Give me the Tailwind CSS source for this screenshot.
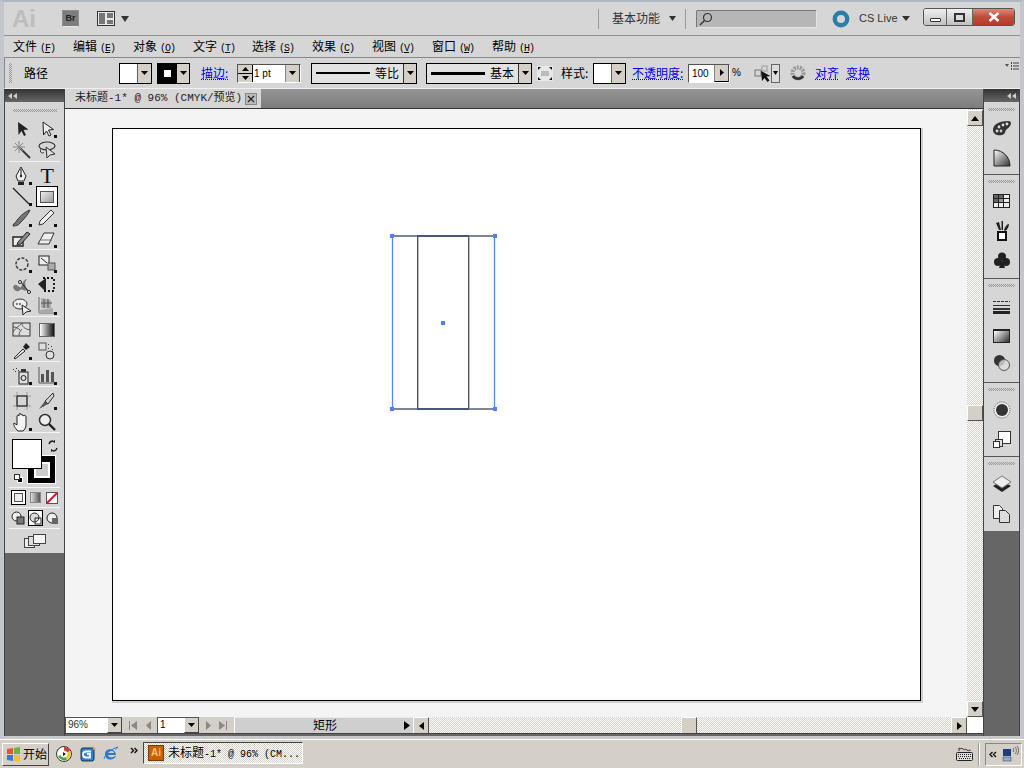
<!DOCTYPE html>
<html><head><meta charset="utf-8"><script src="https://cdn.jsdelivr.net/npm/@tailwindcss/browser@4"></script></head>
<body class="m-0 overflow-hidden">
<div class="w-[1024px] h-[768px] flex flex-col bg-[#d4d0c8] overflow-hidden font-['Liberation_Sans','Noto_Sans_CJK_SC',sans-serif] text-[12px] text-black">
<!-- window -->
<div class="h-[739px] shrink-0 flex flex-col bg-[#d6d6d6] border-x-[4px] border-t-[2px] border-b-[3px] border-x-[#c3c7cb] border-t-[#aeb9c3] border-b-[#c9c9c9]">
 <!-- title bar -->
 <div class="h-[34px] shrink-0 flex items-center border-b border-[#8f8f8f] pl-[8px] relative">
  <span class="w-[24px] text-[24px] leading-[24px] font-bold text-[#bdbdbd] font-['Liberation_Sans',sans-serif]">Ai</span>
  <span class="ml-[26px] w-[17px] h-[17px] bg-[#7d7d7d] border border-[#8f8f8f] border-b-[#e8e8e8] text-[9px] leading-[15px] font-bold text-center text-[#222]">Br</span>
  <svg class="ml-[18px]" width="19" height="16" viewBox="0 0 19 16"><rect x=".5" y=".5" width="17" height="14" fill="#e8e8e8" stroke="#333"/><rect x="2" y="2" width="6" height="11" fill="#777"/><rect x="10" y="2" width="6" height="5" fill="#777"/><rect x="10" y="9" width="6" height="4" fill="#777"/></svg>
  <svg class="ml-[5px]" width="8" height="6" viewBox="0 0 8 6"><path d="M0 0h8L4 6z" fill="#333"/></svg>
  <div class="ml-[469px] w-px h-[20px] bg-[#9a9a9a]"></div>
  <span class="ml-[13px] text-[12px] text-[#333] w-[48px] leading-none">基本功能</span>
  <svg class="ml-[9px]" width="7" height="5" viewBox="0 0 7 5"><path d="M0 0h7L3.500 5z" fill="#333"/></svg>
  <div class="ml-[9px] w-px h-[20px] bg-[#9a9a9a]"></div>
  <div class="ml-[10px] w-[121px] h-[18px] bg-[#b6b6b6] border border-[#777] border-b-[#e6e6e6] border-r-[#e6e6e6] rounded-[2px] flex items-center pl-[2px]"><svg width="14" height="14" viewBox="0 0 14 14"><circle cx="8.500" cy="5.500" r="4" fill="none" stroke="#333" stroke-width="1.200"/><path d="M5.500 8.500L1 13" stroke="#333" stroke-width="1.500"/></svg></div>
  <svg class="ml-[15px]" width="18" height="18" viewBox="0 0 18 18"><circle cx="9" cy="9" r="6.200" fill="none" stroke="#2a7fa8" stroke-width="4.400"/></svg>
  <span class="ml-[9px] w-[38px] text-[#333] text-[11px] whitespace-nowrap">CS Live</span>
  <svg class="ml-[5px]" width="8" height="5" viewBox="0 0 8 5"><path d="M0 0h8L4 5z" fill="#333"/></svg>
  <div class="ml-[13px] w-[92px] h-[18px] flex border border-[#555] rounded-[3px] overflow-hidden -mt-[3px]">
   <div class="w-[23px] bg-[linear-gradient(#f0f0f0,#c0c0c0)] border-r border-[#666] flex items-end justify-center pb-[3px]"><div class="w-[11px] h-[4px] bg-white border border-[#333] rounded-[1px]"></div></div>
   <div class="w-[26px] bg-[linear-gradient(#f0f0f0,#c0c0c0)] border-r border-[#666] flex items-center justify-center"><div class="w-[11px] h-[9px] border-[2px] border-[#333] bg-[#ddd]"></div></div>
   <div class="flex-1 bg-[linear-gradient(#e08878,#c04b3a_50%,#b83a28)] flex items-center justify-center"><svg width="12" height="10" viewBox="0 0 12 10"><path d="M1.500 1l9 8M10.500 1l-9 8" stroke="#fff" stroke-width="2.600"/></svg></div>
  </div>
 </div>
 <!-- menu -->
 <div class="h-[21px] shrink-0 flex items-center pl-[9px] font-['Noto_Sans_CJK_SC',sans-serif] text-[12px] leading-none text-black">
  <span class="w-[60px] whitespace-nowrap">文件<span class="ml-[3px] font-['Liberation_Mono'] text-[10px] tracking-[-1px]">(<u>F</u>)</span></span>
  <span class="w-[60px] whitespace-nowrap">编辑<span class="ml-[3px] font-['Liberation_Mono'] text-[10px] tracking-[-1px]">(<u>E</u>)</span></span>
  <span class="w-[60px] whitespace-nowrap">对象<span class="ml-[3px] font-['Liberation_Mono'] text-[10px] tracking-[-1px]">(<u>O</u>)</span></span>
  <span class="w-[59px] whitespace-nowrap">文字<span class="ml-[3px] font-['Liberation_Mono'] text-[10px] tracking-[-1px]">(<u>T</u>)</span></span>
  <span class="w-[60px] whitespace-nowrap">选择<span class="ml-[3px] font-['Liberation_Mono'] text-[10px] tracking-[-1px]">(<u>S</u>)</span></span>
  <span class="w-[60px] whitespace-nowrap">效果<span class="ml-[3px] font-['Liberation_Mono'] text-[10px] tracking-[-1px]">(<u>C</u>)</span></span>
  <span class="w-[60px] whitespace-nowrap">视图<span class="ml-[3px] font-['Liberation_Mono'] text-[10px] tracking-[-1px]">(<u>V</u>)</span></span>
  <span class="w-[60px] whitespace-nowrap">窗口<span class="ml-[3px] font-['Liberation_Mono'] text-[10px] tracking-[-1px]">(<u>W</u>)</span></span>
  <span class="w-[60px] whitespace-nowrap">帮助<span class="ml-[3px] font-['Liberation_Mono'] text-[10px] tracking-[-1px]">(<u>H</u>)</span></span>
 </div>
 <!-- control bar -->
 <div class="h-[32px] shrink-0 flex items-center border-t border-l border-[#8a8a8a] border-b border-b-[#f0f0f0] relative font-['Noto_Sans_CJK_SC',sans-serif] leading-none">
  <div class="ml-[4px] w-[3px] h-[20px] bg-[repeating-conic-gradient(#999999_0%_25%,#d6d6d6_0%_50%)] bg-size-[2px_2px]"></div>
  <span class="ml-[12px] w-[24px] whitespace-nowrap">路径</span>
  <!-- fill -->
  <div class="ml-[71px] w-[33px] h-[21px] flex border border-black bg-white"><div class="w-[18px] border-r border-[#2a6bb0]"></div><div class="flex-1 bg-[#d4d0c8] flex items-center justify-center"><svg width="7" height="4"><path d="M0 0h7L3.500 4z"/></svg></div></div>
  <!-- stroke -->
  <div class="ml-[5px] w-[33px] h-[21px] flex border border-black"><div class="w-[19px] bg-black flex items-center justify-center"><div class="w-[7px] h-[7px] bg-white"></div></div><div class="flex-1 bg-[#d4d0c8] flex items-center justify-center"><svg width="7" height="4"><path d="M0 0h7L3.500 4z"/></svg></div></div>
  <span class="ml-[11px] text-[#0000ee] underline decoration-dotted w-[28px] whitespace-nowrap">描边:</span>
  <!-- weight -->
  <div class="ml-[8px] w-[64px] h-[19px] flex border border-[#555] border-b-white border-r-white bg-white">
   <div class="w-[15px] flex flex-col bg-[#d4d0c8] border-r border-black text-center"><div class="flex-1 flex items-center justify-center border-b border-black"><svg width="7" height="4"><path d="M0 4h7L3.500 0z"/></svg></div><div class="flex-1 flex items-center justify-center"><svg width="7" height="4"><path d="M0 0h7L3.500 4z"/></svg></div></div>
   <span class="pl-[1px] w-[31px] text-[10px] leading-[17px] font-['Liberation_Sans']">1 pt</span>
   <div class="w-[15px] bg-[#d4d0c8] border-l border-[#888] border-r border-r-[#444] flex items-center justify-center ml-[1px]"><svg width="7" height="4"><path d="M0 0h7L3.500 4z"/></svg></div>
  </div>
  <!-- line 1 -->
  <div class="ml-[10px] w-[106px] h-[21px] flex items-center border border-black bg-[#e2e2e2]">
   <div class="ml-[4px] w-[54px] h-[2px] bg-black shrink-0"></div><span class="ml-[5px] w-[24px] shrink-0 whitespace-nowrap text-[12px]">等比</span>
   <div class="ml-[4px] w-[13px] shrink-0 h-full border-l border-[#333] bg-[#d4d0c8] flex items-center justify-center"><svg width="7" height="4"><path d="M0 0h7L3.500 4z"/></svg></div>
  </div>
  <!-- line 2 -->
  <div class="ml-[9px] w-[106px] h-[21px] flex items-center border border-black bg-[#e2e2e2]">
   <div class="ml-[4px] w-[54px] h-[3px] bg-black shrink-0"></div><span class="ml-[5px] w-[24px] shrink-0 whitespace-nowrap">基本</span>
   <div class="ml-[4px] w-[13px] shrink-0 h-full border-l border-[#333] bg-[#d4d0c8] flex items-center justify-center"><svg width="7" height="4"><path d="M0 0h7L3.500 4z"/></svg></div>
  </div>
  <svg class="ml-[5px]" width="16" height="15" viewBox="0 0 16 15"><rect width="16" height="15" fill="#e8e8e8"/><rect x="4" y="5" width="8" height="5" fill="#bbb"/><path d="M1 1h3L1 4zM15 1h-3l3 3zM1 14h3l-3-3zM15 14h-3l3-3z" fill="#111"/></svg>
  <span class="ml-[8px] w-[28px] whitespace-nowrap">样式:</span>
  <div class="ml-[4px] w-[33px] h-[21px] flex border border-black bg-white"><div class="w-[18px] border-r border-[#2a6bb0]"></div><div class="flex-1 bg-[#d4d0c8] flex items-center justify-center"><svg width="7" height="4"><path d="M0 0h7L3.500 4z"/></svg></div></div>
  <span class="ml-[6px] text-[#0000ee] underline decoration-dotted w-[52px] whitespace-nowrap">不透明度:</span>
  <div class="ml-[4px] w-[42px] h-[19px] flex border border-[#555] border-b-white border-r-white bg-white">
   <span class="w-[25px] pl-[3px] text-[10px] leading-[17px] font-['Liberation_Sans']">100</span>
   <div class="flex-1 bg-[#d4d0c8] border-l border-[#888] border-r border-r-[#444] border-b border-b-black flex items-center justify-center"><svg width="4" height="7"><path d="M0 0v7l4-3.500z"/></svg></div>
  </div>
  <span class="ml-[2px] w-[10px] text-[10px] font-['Liberation_Sans']">%</span>
  <svg class="ml-[12px]" width="17" height="19" viewBox="0 0 17 19"><rect x="1" y="6" width="6" height="6" fill="none" stroke="#777"/><rect x="8" y="2" width="5" height="5" fill="none" stroke="#999"/><path d="M7 7l1 10 2.500-3 3 4 2-1.500-3-4 4-.5z" fill="#111"/></svg>
  <div class="w-[9px] h-[19px] border border-[#666] bg-[#ddd] flex items-center justify-center"><svg width="5" height="4"><path d="M0 0h5L2.500 4z"/></svg></div>
  <svg class="ml-[10px]" width="16" height="16" viewBox="0 0 16 16"><circle cx="8" cy="8" r="5.500" fill="none" stroke="#999" stroke-width="4" stroke-dasharray="2 1"/><path d="M3 11a6 6 0 0 0 10 0" fill="none" stroke="#333" stroke-width="2.500"/></svg>
  <span class="ml-[9px] text-[#0000ee] underline decoration-dotted w-[24px]">对齐</span>
  <span class="ml-[7px] text-[#0000ee] underline decoration-dotted w-[24px]">变换</span>
  <svg class="absolute right-[1px] top-[3px]" width="14" height="10" viewBox="0 0 14 10"><path d="M0 3h4L2 6z" fill="#555"/><path d="M6 1h1v2H6zM6 4h1v2H6zM6 7h1v2H6zM8 1.500h6v1H8zM8 4.500h6v1H8zM8 7.500h6v1H8z" fill="#444"/></svg>
 </div>
 <!-- work area -->
 <div class="flex-1 min-h-0 flex bg-[#666]">
  <!-- left toolbar -->
  <div class="w-[61px] shrink-0 flex flex-col border-l border-r border-[#444] bg-[#666]">
   <div class="h-[13px] bg-[linear-gradient(#333,#666)] flex items-center pl-[3px] shrink-0"><svg width="9" height="6" viewBox="0 0 9 6"><path d="M4 0v6L0 3zM9 0v6L5 3z" fill="#ccc"/></svg></div>
   <div class="h-[451px] shrink-0 bg-[#d6d6d6] flex flex-col items-center">
    <div class="h-[16px] w-full flex items-center justify-center shrink-0"><div class="w-[44px] h-[3px] bg-[repeating-conic-gradient(#999999_0%_25%,#d6d6d6_0%_50%)] bg-size-[2px_2px]"></div></div>
    <!-- section 1 -->
    <div class="w-[51px] h-[44px] grid grid-cols-2 grid-rows-2 place-items-center border-b border-[#f4f4f4] shrink-0">
     <svg width="20" height="20" viewBox="0 0 20 20"><path d="M6 3l.5 13 3-4 2.500 5 2-1-2.500-5 5-.5z" fill="#222"/></svg>
     <svg width="20" height="20" viewBox="0 0 20 20"><path d="M6 3l.5 13 3-4 2.500 5 2-1-2.500-5 5-.5z" fill="#eee" stroke="#222"/><path d="M17 16h3v3h-3z" fill="#111"/></svg>
     <svg width="20" height="20" viewBox="0 0 20 20"><path d="M8 8l10 10" stroke="#333" stroke-width="1.800"/><path d="M7 1v12M1 7h12M3 3l8 8M11 3l-8 8" stroke="#888"/></svg>
     <svg width="20" height="20" viewBox="0 0 20 20"><ellipse cx="10" cy="6" rx="8" ry="4" fill="none" stroke="#333" stroke-width="1.200"/><path d="M4 9c-2 4 2 5 3 3M9 7l1 11 3-3 5-1z" fill="#ddd" stroke="#333"/></svg>
    </div>
    <!-- section 2 -->
    <div class="w-[51px] h-[88px] pt-[3px] grid grid-cols-2 grid-rows-4 place-items-center border-b border-[#f4f4f4] shrink-0">
     <svg width="20" height="20" viewBox="0 0 20 20"><path d="M9 1l5 9-2 5H6l-2-5z" fill="#eee" stroke="#222"/><path d="M9 3v6" stroke="#222"/><circle cx="9" cy="10" r="1.200" fill="#222"/><path d="M6 16h6v3H6z" fill="#222"/><path d="M17 16h3v3h-3z" fill="#111"/></svg>
     <span class="font-['Liberation_Serif'] text-[22px] leading-none text-[#111]">T</span>
     <svg width="20" height="20" viewBox="0 0 20 20"><path d="M1 1l16 16" stroke="#222" stroke-width="1.200"/><path d="M17 16h3v3h-3z" fill="#111"/></svg>
     <div class="w-[22px] h-[21px] bg-white border border-black flex items-center justify-center relative"><div class="w-[14px] h-[12px] border border-[#555] bg-[linear-gradient(135deg,#eee,#999)]"></div></div>
     <svg width="20" height="20" viewBox="0 0 20 20"><path d="M18 2C12 4 6 10 4 14c-2 1-3 3-3 4 3 0 6-1 7-3 3-3 8-8 10-13z" fill="#777" stroke="#333"/><path d="M17 16h3v3h-3z" fill="#111"/></svg>
     <svg width="20" height="20" viewBox="0 0 20 20"><path d="M14 2l3 3L6 16l-4 1 1-4z" fill="#eee" stroke="#333"/><path d="M17 16h3v3h-3z" fill="#111"/></svg>
     <svg width="20" height="20" viewBox="0 0 20 20"><path d="M1 8h10v9H1z" fill="#eee" stroke="#222" stroke-width="1.400"/><path d="M6 13L15 3l3 2-9 10-4 1z" fill="#888" stroke="#222"/></svg>
     <svg width="20" height="20" viewBox="0 0 20 20"><path d="M7 4h10l-5 11H1z" fill="#eee" stroke="#333"/><path d="M3 11h12" stroke="#777"/><path d="M17 16h3v3h-3z" fill="#111"/></svg>
    </div>
    <!-- section 3 -->
    <div class="w-[51px] h-[67px] pt-[3px] grid grid-cols-2 grid-rows-3 place-items-center border-b border-[#f4f4f4] shrink-0">
     <svg width="20" height="20" viewBox="0 0 20 20"><circle cx="10" cy="10" r="6" fill="none" stroke="#333" stroke-width="1.400" stroke-dasharray="3 1.500"/><path d="M17 16h3v3h-3z" fill="#111"/></svg>
     <svg width="20" height="20" viewBox="0 0 20 20"><rect x="2" y="2" width="10" height="9" fill="#eee" stroke="#222"/><rect x="11" y="9" width="7" height="7" fill="#aaa" stroke="#555"/><path d="M4 4l6 5" stroke="#222"/><path d="M17 16h3v3h-3z" fill="#111"/></svg>
     <svg width="20" height="20" viewBox="0 0 20 20"><path d="M1 12c3-6 6 2 8 0s1-7 6-8c-3 3-2 8 1 11-5 2-6-3-9 1-2 1-5 0-6-4z" fill="#777"/><path d="M8 6l9 11" stroke="#222"/><circle cx="8" cy="7" r="1.500" fill="#fff" stroke="#222"/><circle cx="17" cy="17" r="1.500" fill="#fff" stroke="#222"/></svg>
     <svg width="20" height="20" viewBox="0 0 20 20"><path d="M1 9l8-6v14z" fill="#222"/><path d="M6 3h11v13H6" fill="none" stroke="#111" stroke-width="1.800" stroke-dasharray="2 2"/></svg>
     <svg width="20" height="20" viewBox="0 0 20 20"><ellipse cx="8" cy="8" rx="7" ry="5" fill="#eee" stroke="#333"/><circle cx="5" cy="8" r="1" fill="#555"/><circle cx="8" cy="8" r="1" fill="#555"/><path d="M10 9l1 10 3-3 5-1z" fill="#eee" stroke="#222"/></svg>
     <svg width="20" height="20" viewBox="0 0 20 20"><path d="M2 1v16h16" fill="none" stroke="#666"/><path d="M2 14l14-2v5H2zM4 2l10 2v8H4z" fill="#aaa"/><path d="M7 3v9M11 3v9M4 7h11" stroke="#555"/><path d="M17 16h3v3h-3z" fill="#111"/></svg>
    </div>
    <!-- section 4 -->
    <div class="w-[51px] h-[45px] pt-[3px] grid grid-cols-2 grid-rows-2 place-items-center border-b border-[#f4f4f4] shrink-0">
     <svg width="20" height="20" viewBox="0 0 20 20"><rect x="1" y="3" width="17" height="13" fill="#ddd" stroke="#333"/><path d="M1 12C5 6 8 6 10 3M10 3c0 4 3 6 8 7M7 16c0-4 2-6 3-7M1 7c3 0 5 1 7 3" stroke="#555" fill="none"/></svg>
     <div class="w-[16px] h-[14px] bg-[linear-gradient(90deg,#fff,#111)] border border-[#666]"></div>
     <svg width="20" height="20" viewBox="0 0 20 20"><path d="M3 18l-1-1 9-9 2 2z" fill="#eee" stroke="#222"/><path d="M11 6l3-4 4 4-4 3z" fill="#222"/><path d="M17 16h3v3h-3z" fill="#111"/></svg>
     <svg width="20" height="20" viewBox="0 0 20 20"><rect x="2" y="2" width="7" height="7" fill="#ddd" stroke="#555"/><path d="M11 3h1v1h-1zM14 5h1v1h-1zM11 7h1v1h-1zM15 8h1v1h-1z" fill="#444"/><circle cx="13" cy="14" r="4" fill="#ddd" stroke="#333"/></svg>
    </div>
    <!-- section 5 -->
    <div class="w-[51px] h-[25px] pt-[3px] grid grid-cols-2 place-items-center border-b border-[#f4f4f4] shrink-0">
     <svg width="20" height="20" viewBox="0 0 20 20"><rect x="7" y="6" width="9" height="12" fill="#ddd" stroke="#222"/><circle cx="11.500" cy="12" r="2.500" fill="none" stroke="#222"/><rect x="9" y="3" width="5" height="3" fill="#333"/><path d="M1 3h1v1H1zM4 2h1v1H4zM3 5h1v1H3zM6 4h1v1H6z" fill="#333"/><path d="M17 16h3v3h-3z" fill="#111"/></svg>
     <svg width="20" height="20" viewBox="0 0 20 20"><path d="M2 1v16h15" fill="none" stroke="#555"/><path d="M4 8h3v8H4zM9 4h3v12H9zM14 6h3v10h-3z" fill="#555"/><path d="M17 16h3v3h-3z" fill="#111"/></svg>
    </div>
    <!-- section 6 -->
    <div class="w-[51px] h-[46px] pt-[3px] grid grid-cols-2 grid-rows-2 place-items-center border-b border-[#f4f4f4] shrink-0">
     <svg width="20" height="20" viewBox="0 0 20 20"><rect x="5" y="5" width="10" height="10" fill="none" stroke="#222" stroke-width="1.300"/><path d="M1 5h3M16 5h3M1 15h3M16 15h3M5 1v3M15 1v3M5 16v3M15 16v3" stroke="#999"/></svg>
     <svg width="20" height="20" viewBox="0 0 20 20"><path d="M2 18l6-8 3 3z" fill="#555"/><path d="M8 10l8-8 1 3-6 8z" fill="#ccc" stroke="#333"/><path d="M17 16h3v3h-3z" fill="#111"/></svg>
     <svg width="20" height="20" viewBox="0 0 20 20"><path d="M6 19c-3-3-5-6-4-8l3 2V4c1-2 2 0 2 0V2c1-1 2 0 2 0v1c1-1 2 0 2 0v1c1-1 3-1 3 1v8c0 3-2 5-3 6z" fill="#f4f4f4" stroke="#222"/><path d="M17 16h3v3h-3z" fill="#111"/></svg>
     <svg width="20" height="20" viewBox="0 0 20 20"><circle cx="8" cy="8" r="5.500" fill="#eee" stroke="#333" stroke-width="1.500"/><path d="M12 12l6 6" stroke="#222" stroke-width="2.400"/></svg>
    </div>
    <!-- color -->
    <div class="w-[51px] h-[55px] relative border-b border-[#f4f4f4] shrink-0">
     <div class="absolute left-[18px] top-[22px] w-[29px] h-[29px] bg-black border border-white flex items-center justify-center"><div class="w-[16px] h-[16px] border-[2px] border-white bg-[#ccc]"></div></div>
     <div class="absolute left-[3px] top-[6px] w-[30px] h-[30px] bg-white border border-black"></div>
     <svg class="absolute left-[38px] top-[7px]" width="12" height="12" viewBox="0 0 12 12"><path d="M2 4a4 4 0 0 1 4-3M10 8a4 4 0 0 1-4 3" fill="none" stroke="#222" stroke-width="1.300"/><path d="M8 0v3l-3-1.500zM4 9v3l3-1.500z" fill="#222"/></svg>
     <div class="absolute left-[8px] top-[44px] w-[6px] h-[6px] bg-black border border-white"></div>
     <div class="absolute left-[5px] top-[41px] w-[6px] h-[6px] bg-white border border-[#333]"></div>
    </div>
    <!-- modes -->
    <div class="w-[51px] h-[20px] flex items-center justify-around border-b border-[#f4f4f4] shrink-0">
     <div class="w-[15px] h-[15px] bg-white border border-black p-[2px]"><div class="w-full h-full border border-[#555] bg-[#eee]"></div></div>
     <div class="w-[11px] h-[11px] bg-[linear-gradient(90deg,#ddd,#555)] border border-[#888]"></div>
     <svg width="12" height="12" viewBox="0 0 12 12"><rect x=".5" y=".5" width="11" height="11" fill="#fff" stroke="#555"/><path d="M1 11L11 1" stroke="#e0102a" stroke-width="2"/></svg>
    </div>
    <!-- draw modes -->
    <div class="w-[51px] h-[21px] flex items-center justify-around border-b border-[#f4f4f4] shrink-0">
     <svg width="14" height="14" viewBox="0 0 14 14"><circle cx="5.500" cy="5.500" r="4.500" fill="#eee" stroke="#222"/><rect x="6" y="6" width="7" height="7" fill="#777" stroke="#222"/></svg>
     <div class="w-[15px] h-[16px] bg-white border border-black flex items-center justify-center"><svg width="13" height="13" viewBox="0 0 13 13"><circle cx="5.500" cy="5.500" r="4.500" fill="#ddd" stroke="#222"/><rect x="6" y="6" width="6" height="6" fill="none" stroke="#222"/></svg></div>
     <svg width="13" height="13" viewBox="0 0 13 13"><circle cx="6" cy="6" r="5" fill="#eee" stroke="#222"/><rect x="6" y="6" width="6" height="6" fill="#666"/></svg>
    </div>
    <!-- screen -->
    <div class="w-[51px] flex-1 flex items-center justify-center"><svg width="22" height="14" viewBox="0 0 22 14"><rect x=".5" y="4.500" width="10" height="9" fill="#eee" stroke="#444"/><rect x="4.500" y="2.500" width="11" height="9" fill="#ddd" stroke="#444"/><rect x="9.500" y=".5" width="12" height="9" fill="#f4f4f4" stroke="#444"/></svg></div>
   </div>
  </div>
  <!-- doc -->
  <div class="w-[918px] shrink-0 flex flex-col">
   <!-- tabs -->
   <div class="h-[20px] shrink-0 flex bg-[linear-gradient(#959595,#7c7c7c)] border-b border-[#333]">
    <div class="w-[196px] h-[19px] bg-[#d6d6d6] flex items-center pl-[10px] pr-[4px] justify-between text-[#222] leading-none">
     <span class="text-[11px] whitespace-nowrap font-['Liberation_Mono','Noto_Sans_CJK_SC',monospace]">未标题-1* @ 96% (CMYK/预览)</span>
     <div class="w-[12px] h-[12px] border border-[#888] bg-[#bbb] flex items-center justify-center"><svg width="8" height="8" viewBox="0 0 8 8"><path d="M1 1l6 6M7 1L1 7" stroke="#222" stroke-width="1.200"/></svg></div>
    </div>
   </div>
   <div class="h-[608px] shrink-0 flex">
    <!-- canvas -->
    <div class="w-[902px] bg-[#f4f4f4] relative pl-[47px] pt-[19px]">
     <div class="w-[809px] h-[573px] bg-white border border-black shadow-[1px_1px_0_1px_#cfcfcf] relative">
      <svg class="absolute left-[276px] top-[105px]" width="109" height="178" viewBox="0 0 109 178"><path d="M29.500 2v173M80.500 2v173" stroke="#bbb"/><path d="M28.500 2v173M79.500 2v173" stroke="#555"/><path d="M3.500 2v173M105.500 2v173" stroke="#5a85f0" stroke-width="1.300"/><path d="M3 2h103M3 175h103" stroke="#7d8594" stroke-width="2"/><path d="M28 2h52M28 175h52" stroke="#4a5878" stroke-width="2"/><path d="M1 0h4v4H1zM104 0h4v4h-4zM1 173h4v4H1zM104 173h4v4h-4zM52 87h4v4h-4z" fill="#4f80ff"/></svg>
     </div>
    </div>
    <!-- v scroll -->
    <div class="w-[16px] flex flex-col bg-[repeating-conic-gradient(#d4d0c8_0%_25%,#ffffff_0%_50%)] bg-size-[2px_2px]">
     <div class="h-[16px] mt-[1px] bg-[#d4d0c8] border-r border-b border-[#555] border-t border-l border-t-white border-l-white flex items-center justify-center"><svg width="8" height="5"><path d="M0 5h8L4 0z"/></svg></div>
     <div class="h-[16px] mt-[279px] bg-[#d4d0c8] border-r border-b border-[#555] border-t border-l border-t-white border-l-white"></div>
     <div class="h-[16px] mt-[280px] bg-[#d4d0c8] border-r border-b border-[#555] border-t border-l border-t-white border-l-white flex items-center justify-center"><svg width="8" height="5"><path d="M0 0h8L4 5z"/></svg></div>
    </div>
   </div>
   <!-- status -->
   <div class="h-[17px] shrink-0 flex bg-[#d4d0c8] border-b border-[#444] leading-none">
    <div class="w-[57px] flex bg-white border-t border-l border-[#555]"><span class="w-[41px] pl-[2px] text-[10px] leading-[14px] text-[#333]">96%</span><div class="flex-1 bg-[#d4d0c8] border-l border-white border-r border-r-[#444] border-b border-b-[#444] flex items-center justify-center"><svg width="7" height="4"><path d="M0 0h7L3.500 4z"/></svg></div></div>
    <div class="w-[35px] flex items-center justify-around px-[2px]"><svg width="8" height="9"><path d="M0 0h1v9H0zM8 0v9L2 4.500z" fill="#888"/></svg><svg width="5" height="9"><path d="M5 0v9L0 4.500z" fill="#888"/></svg></div>
    <div class="w-[42px] flex bg-white border-t border-l border-[#555]"><span class="w-[26px] pl-[2px] text-[10px] leading-[14px]">1</span><div class="flex-1 bg-[#d4d0c8] border-l border-white border-r border-r-[#444] border-b border-b-[#444] flex items-center justify-center"><svg width="7" height="4"><path d="M0 0h7L3.500 4z"/></svg></div></div>
    <div class="w-[35px] flex items-center justify-around px-[3px]"><svg width="5" height="9"><path d="M0 0v9l5-4.500z" fill="#888"/></svg><svg width="8" height="9"><path d="M7 0h1v9H7zM0 0v9l6-4.500z" fill="#888"/></svg></div>
    <div class="w-[179px] bg-[#cfcfcf] border-t border-l border-t-[#e8e8e8] border-l-white flex items-center pl-[78px] pr-[3px] justify-between"><span class="text-[12px]">矩形</span><svg width="6" height="9"><path d="M0 0v9l6-4.500z"/></svg></div>
    <div class="w-[16px] bg-[#d4d0c8] border-t border-l border-t-white border-l-white border-r border-r-[#555] flex items-center justify-center"><svg width="5" height="8"><path d="M5 0v8L0 4z"/></svg></div>
    <div class="flex-1 flex bg-[repeating-conic-gradient(#d4d0c8_0%_25%,#ffffff_0%_50%)] bg-size-[2px_2px]">
     <div class="ml-[252px] w-[16px] bg-[#d4d0c8] border-t border-l border-t-white border-l-white border-r border-r-[#555]"></div>
     <div class="ml-auto w-[16px] bg-[#d4d0c8] border-t border-l border-t-white border-l-white border-r border-r-[#555] flex items-center justify-center"><svg width="5" height="8"><path d="M0 0v8l5-4z"/></svg></div>
     <div class="w-[16px] bg-white"></div>
    </div>
   </div>
  </div>
  <!-- right dock -->
  <div class="w-[37px] shrink-0 flex flex-col border-l-[1px] border-r-[1px] border-[#444] bg-[#666]">
   <div class="h-[13px] shrink-0 bg-[linear-gradient(#333,#666)] flex items-center justify-end pr-[3px]"><svg width="9" height="6" viewBox="0 0 9 6"><path d="M4 0v6L0 3zM9 0v6L5 3z" fill="#ccc"/></svg></div>
   <div class="h-[73px] shrink-0 bg-[#d6d6d6] border-b-[1px] border-[#555] flex flex-col items-center">
    <div class="w-[27px] h-[3px] mt-[6px] bg-[repeating-conic-gradient(#999999_0%_25%,#d6d6d6_0%_50%)] bg-size-[2px_2px]"></div>
    <svg class="mt-[9px]" width="20" height="18" viewBox="0 0 20 18"><path d="M1 10C1 4 8 1 16 1c5 0 3 5-1 8-3 3-1 5-5 6-5 1-9-1-9-5z" fill="#333"/><circle cx="5" cy="11" r="1.400" fill="#ddd"/><circle cx="9" cy="11" r="1.400" fill="#ccc"/><circle cx="7" cy="7" r="1.400" fill="#ddd"/><circle cx="11" cy="5" r="1.400" fill="#ddd"/><circle cx="15" cy="4" r="1.400" fill="#ddd"/></svg>
    <svg class="mt-[11px]" width="18" height="18" viewBox="0 0 18 18"><defs><linearGradient id="w" x1="0" y1="0" x2="1" y2="1"><stop offset="0" stop-color="#fff"/><stop offset="1" stop-color="#333"/></linearGradient></defs><path d="M1 1c9 0 16 7 16 16H1z" fill="url(#w)" stroke="#222"/></svg>
   </div>
   <div class="h-[104px] shrink-0 bg-[#d6d6d6] border-b-[1px] border-[#555] flex flex-col items-center">
    <div class="w-[27px] h-[3px] mt-[5px] bg-[repeating-conic-gradient(#999999_0%_25%,#d6d6d6_0%_50%)] bg-size-[2px_2px]"></div>
    <svg class="mt-[11px]" width="17" height="14" viewBox="0 0 17 14"><rect width="17" height="14" fill="#222"/><path d="M1 1h4v3H1zM6 1h4v3H6z" fill="#666"/><path d="M11 1h5v3h-5z" fill="#eee"/><path d="M1 5h4v3H1z" fill="#666"/><path d="M6 5h4v3H6z" fill="#999"/><path d="M11 5h5v3h-5z" fill="#eee"/><path d="M1 9h4v4H1zM6 9h4v4H6zM11 9h5v4h-5z" fill="#eee"/></svg>
    <svg class="mt-[13px]" width="16" height="20" viewBox="0 0 16 20"><rect x="4" y="11" width="8" height="8" fill="#fff" stroke="#111" stroke-width="2"/><path d="M2 2l3 7h2L5 1zM7.500 0v9h1.500V0zM15 3c-2 0-4 3-5 6l1 1c2-1 4-4 4-7z" fill="#222"/></svg>
    <svg class="mt-[11px]" width="16" height="17" viewBox="0 0 16 17"><circle cx="8" cy="4.500" r="4" fill="#222"/><circle cx="4" cy="10" r="4" fill="#222"/><circle cx="12" cy="10" r="4" fill="#222"/><path d="M7 10h2l2 6H5z" fill="#222"/></svg>
   </div>
   <div class="h-[104px] shrink-0 bg-[#d6d6d6] border-b-[1px] border-[#555] flex flex-col items-center">
    <div class="w-[27px] h-[3px] mt-[5px] bg-[repeating-conic-gradient(#999999_0%_25%,#d6d6d6_0%_50%)] bg-size-[2px_2px]"></div>
    <svg class="mt-[14px]" width="17" height="13" viewBox="0 0 17 13"><path d="M0 .5h17" stroke="#333" stroke-dasharray="3 1"/><path d="M0 4.500h17" stroke="#333"/><path d="M0 8h17" stroke="#333" stroke-width="2"/><rect y="10" width="17" height="3" fill="#222"/></svg>
    <div class="mt-[15px] w-[17px] h-[14px] bg-[linear-gradient(135deg,#fff,#333)] border border-[#222] border-t-[2px]"></div>
    <svg class="mt-[11px]" width="18" height="18" viewBox="0 0 18 18"><circle cx="6.500" cy="6.500" r="5.500" fill="#333"/><circle cx="11" cy="11" r="5.500" fill="#ddd" fill-opacity=".8" stroke="#555"/></svg>
   </div>
   <div class="h-[74px] shrink-0 bg-[#d6d6d6] border-b-[1px] border-[#555] flex flex-col items-center">
    <div class="w-[27px] h-[3px] mt-[5px] bg-[repeating-conic-gradient(#999999_0%_25%,#d6d6d6_0%_50%)] bg-size-[2px_2px]"></div>
    <svg class="mt-[10px]" width="18" height="18" viewBox="0 0 18 18"><circle cx="9" cy="9" r="8" fill="#eee" stroke="#555" stroke-dasharray="1 1"/><circle cx="9" cy="9" r="6" fill="#333"/></svg>
    <svg class="mt-[12px]" width="18" height="18" viewBox="0 0 18 18"><rect x="5.500" y=".5" width="12" height="12" fill="#fff" stroke="#333"/><rect x="2.500" y="8.500" width="7" height="7" fill="#ddd" stroke="#333"/><rect x=".5" y="10.500" width="6" height="6" fill="#fff" stroke="#333"/></svg>
   </div>
   <div class="h-[74px] shrink-0 bg-[#d6d6d6] flex flex-col items-center">
    <div class="w-[27px] h-[3px] mt-[5px] bg-[repeating-conic-gradient(#999999_0%_25%,#d6d6d6_0%_50%)] bg-size-[2px_2px]"></div>
    <svg class="mt-[10px]" width="18" height="18" viewBox="0 0 18 18"><path d="M0 11l9-5 9 5-9 6z" fill="#222"/><path d="M0 7l9-6 9 6-9 6z" fill="#eee" stroke="#777"/></svg>
    <svg class="mt-[11px]" width="20" height="20" viewBox="0 0 20 20"><path d="M1.500 1.500h6l3 3v10h-9z" fill="#eee" stroke="#333"/><path d="M7.500 6.500h6l4 4v8h-10z" fill="#ddd" stroke="#333"/></svg>
   </div>
  </div>
 </div>
</div>
<!-- taskbar -->
<div class="flex-1 flex items-center bg-[#d4d0c8] border-t border-white relative font-['Noto_Sans_CJK_SC',sans-serif] leading-none">
 <div class="ml-[2px] w-[47px] h-[23px] flex items-center border border-t-white border-l-white border-r-[#444] border-b-[#444] pl-[3px]">
  <svg width="15" height="15" viewBox="0 0 15 15"><path d="M1 2l6-1v6H1z" fill="#e0572a"/><path d="M8 1l6-1v7H8z" fill="#6cb33f"/><path d="M1 8h6v6l-6-1z" fill="#3b78d8"/><path d="M8 8h6v7l-6-1z" fill="#f2c12e"/></svg>
  <span class="ml-[2px] text-[12px]">开始</span>
 </div>
 <svg class="ml-[7px]" width="16" height="16" viewBox="0 0 16 16"><circle cx="8" cy="8" r="7.500" fill="#fff" stroke="#333"/><path d="M8 1a7 7 0 0 1 6 4L8 8z" fill="#d33"/><path d="M14 5a7 7 0 0 1-3 9L8 8z" fill="#f2c12e"/><path d="M11 14a7 7 0 0 1-9-4l6-2z" fill="#4a4"/><circle cx="8" cy="8" r="3.500" fill="#fff"/><path d="M7 6v4l3-2z" fill="#222"/></svg>
 <svg class="ml-[8px]" width="16" height="16" viewBox="0 0 16 16"><rect x="1" y="2" width="13" height="13" rx="2" fill="#2f7fd8" stroke="#134"/><path d="M11 5.500H6a3 3 0 0 0 0 6h4V8H7" fill="none" stroke="#fff" stroke-width="1.800"/><path d="M13 0l3 3-3 1z" fill="#f2a12e"/></svg>
 <svg class="ml-[7px]" width="16" height="16" viewBox="0 0 16 16"><path d="M13 9H5c.5 3 5 3 7 1h1c-2 5-11 5-11-2 0-6 10-7 11 1z" fill="#2a78d0"/><path d="M5 7h6c-.5-3-5.500-3-6 0z" fill="#d4d0c8"/><path d="M1 13C2 8 8 3 15 1c-3 2-2 3-2 3" fill="none" stroke="#2a78d0"/></svg>
 <svg class="ml-[11px] -mt-[8px]" width="8" height="7" viewBox="0 0 8 7"><path d="M1 1l2.500 2.500L1 6M4.500 1L7 3.500 4.500 6" fill="none" stroke="#111" stroke-width="1.400"/></svg>
 <div class="ml-[5px] w-[160px] h-[22px] flex items-center border border-t-[#444] border-l-[#444] border-r-white border-b-white bg-[repeating-conic-gradient(#d4d0c8_0%_25%,#ffffff_0%_50%)] bg-size-[2px_2px] pl-[4px] -mt-[2px]">
  <div class="w-[16px] h-[16px] bg-[#c85f08] border border-[#7a3a00] text-[#f5c37a] text-[10px] font-bold leading-[14px] text-center font-['Liberation_Sans']">Ai</div>
  <span class="ml-[4px] whitespace-nowrap text-[12px]">未标题<span class="font-['Liberation_Mono',monospace] text-[10px]">-1* @ 96% (CM...</span></span>
 </div>
 <svg class="ml-auto" width="17" height="14" viewBox="0 0 17 14"><path d="M3 4V1c2 2 2-1 4 1s2-1 4 1 2-1 3 0v1" fill="none" stroke="#333"/><rect x=".5" y="5.500" width="16" height="8" rx="1" fill="#ddd" stroke="#222"/><path d="M2 7.500h13M2 9.500h13M3 11.500h11" stroke="#222" stroke-dasharray="1 1"/></svg>
 <div class="ml-[5px] w-[2px] h-[23px] border-l border-[#999] border-r border-r-white"></div>
 <div class="ml-[5px] mr-[2px] w-[37px] h-[23px] flex items-center border border-t-[#888] border-l-[#888] border-r-white border-b-white pl-[3px]">
  <svg width="8" height="7" viewBox="0 0 8 7"><path d="M3.500 1L1 3.500 3.500 6M7 1L4.500 3.500 7 6" fill="none" stroke="#111" stroke-width="1.400"/></svg>
  <svg class="ml-[5px]" width="17" height="16" viewBox="0 0 17 16"><rect x="1" y="3" width="8" height="7" fill="#223a80"/><rect x="1" y="11" width="8" height="4" fill="#99aacc" stroke="#223a80" stroke-width=".5"/><path d="M11 2a3 3 0 0 1 0 4M13 1a5 5 0 0 1 0 7M15 0a7 7 0 0 1 0 9" fill="none" stroke="#555" stroke-width=".8"/></svg>
 </div>
</div>
</div>
</body></html>
